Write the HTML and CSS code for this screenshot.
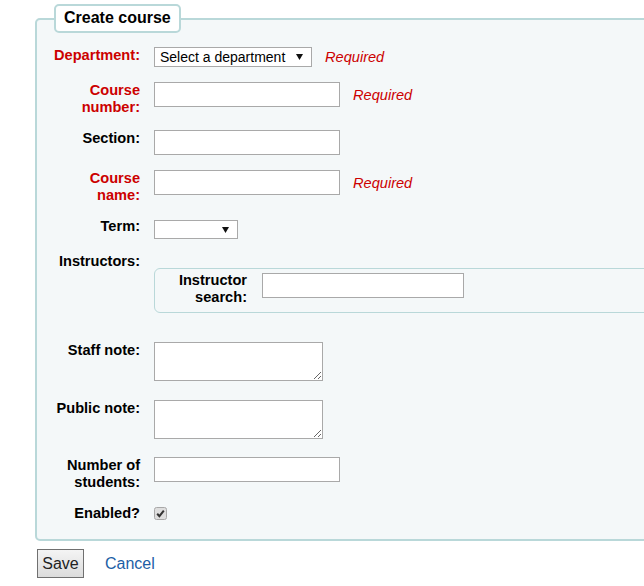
FILE: index.html
```html
<!DOCTYPE html>
<html lang="en">
<head>
<meta charset="utf-8">
<title>Create course</title>
<link rel="stylesheet" href="styles.css">
</head>
<body>
<div class="page">
  <form class="course-form">
    <fieldset class="rows">
      <legend>Create course</legend>
      <ol class="fields">
        <li class="row row-dept">
          <label class="lbl required">Department:</label>
          <div class="ctrl">
            <span class="select-wrap">
              <select class="select select-dept"><option>Select a department</option></select>
              <svg class="arrow" width="7" height="6" viewBox="0 0 7 6"><path d="M0 0H7L3.5 6Z" fill="#111"/></svg>
            </span>
            <span class="req">Required</span>
          </div>
        </li>
        <li class="row">
          <label class="lbl required">Course number:</label>
          <div class="ctrl">
            <input class="text" type="text">
            <span class="req">Required</span>
          </div>
        </li>
        <li class="row row-section">
          <label class="lbl">Section:</label>
          <div class="ctrl">
            <input class="text" type="text">
          </div>
        </li>
        <li class="row">
          <label class="lbl required">Course name:</label>
          <div class="ctrl">
            <input class="text" type="text">
            <span class="req">Required</span>
          </div>
        </li>
        <li class="row">
          <label class="lbl">Term:</label>
          <div class="ctrl">
            <span class="select-wrap term-wrap">
              <select class="select select-term"><option></option></select>
              <svg class="arrow" width="7" height="6" viewBox="0 0 7 6"><path d="M0 0H7L3.5 6Z" fill="#111"/></svg>
            </span>
          </div>
        </li>
        <li class="row">
          <label class="lbl">Instructors:</label>
          <div class="ctrl">
            <fieldset class="inner">
              <div class="inner-row">
                <label class="lbl inner-lbl">Instructor search:</label>
                <input class="text text-search" type="text">
              </div>
            </fieldset>
          </div>
        </li>
        <li class="row">
          <label class="lbl">Staff note:</label>
          <div class="ctrl">
            <textarea class="area"></textarea>
          </div>
        </li>
        <li class="row">
          <label class="lbl">Public note:</label>
          <div class="ctrl">
            <textarea class="area"></textarea>
          </div>
        </li>
        <li class="row">
          <label class="lbl">Number of students:</label>
          <div class="ctrl">
            <input class="text" type="text">
          </div>
        </li>
        <li class="row row-last">
          <label class="lbl">Enabled?</label>
          <div class="ctrl">
            <span class="checkbox" role="checkbox" aria-checked="true">
              <svg width="13" height="13" viewBox="0 0 13 13"><rect x="0.5" y="0.5" width="12" height="12" rx="2" fill="#dedede" stroke="#a8a8a8"/><path d="M3.2 6.8L5.4 9.2L9.8 3.6" fill="none" stroke="#333" stroke-width="2"/></svg>
            </span>
          </div>
        </li>
      </ol>
    </fieldset>
    <div class="actions">
      <button type="button" class="btn">Save</button>
      <a class="cancel" href="#">Cancel</a>
    </div>
  </form>
</div>
</body>
</html>
```
FILE: styles.css
```css
html, body {
  margin: 0;
  padding: 0;
  background: #fff;
  overflow: hidden;
}
body {
  font-family: "Liberation Sans", Arial, sans-serif;
  font-size: 14px;
  color: #000;
}
.page {
  padding: 4px 0 0 35px;
  width: 760px;
}
.course-form {
  margin: 0;
}
fieldset.rows {
  margin: 0;
  padding: 0 0 3px 0;
  width: 700px;
  box-sizing: border-box;
  border: 2px solid #b9d8d9;
  border-radius: 5px;
  background: #f4f8f9;
}
fieldset.rows legend {
  margin-left: 17px;
  padding: 3px 8px 5px 8px;
  border: 2px solid #b9d8d9;
  border-radius: 5px;
  background: #fff;
  font-size: 16px;
  font-weight: bold;
  line-height: 17px;
}
.fields {
  list-style: none;
  margin: 0;
  padding: 14px 0 0 13px;
}
.row {
  display: flex;
  align-items: flex-start;
  padding-bottom: 14px;
}
.row-dept,
.row-section {
  padding-bottom: 15px;
}
.lbl {
  width: 90px;
  flex: none;
  margin-right: 14px;
  text-align: right;
  font-weight: bold;
  font-size: 14.6px;
  line-height: 17px;
}
.lbl.required {
  color: #cc0000;
}
.ctrl {
  display: flex;
  align-items: center;
}
.req {
  margin-left: 13px;
  color: #cc0000;
  font-style: italic;
  font-size: 14.6px;
}
.select-wrap {
  position: relative;
  display: block;
}
.select {
  appearance: none;
  -webkit-appearance: none;
  display: block;
  margin: 0;
  box-sizing: border-box;
  border: 1px solid #a9a9a9;
  border-radius: 0;
  background: #fff;
  font-family: "Liberation Sans", Arial, sans-serif;
  font-size: 14px;
  color: #000;
  padding: 0 0 0 5px;
}
.select-dept {
  width: 158px;
  height: 20px;
}
.term-wrap {
  margin-top: 2px;
}
.select-term {
  width: 84px;
  height: 19px;
}
.arrow {
  position: absolute;
  right: 9px;
  top: 50%;
  margin-top: -3px;
}
.text {
  display: block;
  margin: 0;
  box-sizing: border-box;
  width: 186px;
  height: 25px;
  border: 1px solid #a9a9a9;
  background: #fff;
  padding: 0 4px;
  font-family: "Liberation Sans", Arial, sans-serif;
  font-size: 14px;
}
.text-search {
  width: 202px;
  margin-top: 1px;
}
fieldset.inner {
  margin: 15px 0 15px 0;
  padding: 3px 2px 6px 2px;
  width: 560px;
  box-sizing: border-box;
  border: 1px solid #b9d8d9;
  border-radius: 6px;
  min-width: 0;
}
.inner-row {
  display: flex;
  align-items: flex-start;
}
.inner-lbl {
  margin-right: 15px;
}
.area {
  display: block;
  margin: 0 0 4.5px 0;
  box-sizing: border-box;
  width: 169px;
  height: 39px;
  border: 1px solid #a9a9a9;
  background: #fff;
  padding: 2px;
  font-family: "Liberation Sans", Arial, sans-serif;
  font-size: 14px;
}
.checkbox {
  display: block;
  width: 13px;
  height: 13px;
  margin-top: 2px;
}
.checkbox svg {
  display: block;
}
.actions {
  display: flex;
  align-items: center;
  margin: 8px 0 0 2px;
}
.btn {
  box-sizing: border-box;
  width: 47px;
  height: 29px;
  margin: 0;
  padding: 0;
  border: 1px solid #707070;
  border-radius: 0;
  background: linear-gradient(#f4f4f4, #dcdcdc);
  font-family: "Liberation Sans", Arial, sans-serif;
  font-size: 16px;
  color: #222;
}
.cancel {
  margin-left: 21px;
  font-size: 16px;
  color: #1c5ea6;
  text-decoration: none;
}
```
